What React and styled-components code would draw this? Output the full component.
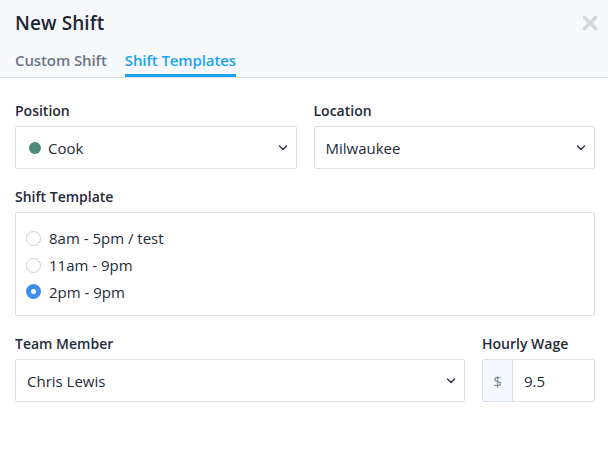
import React from 'react';
import styled, { createGlobalStyle } from 'styled-components';

const GlobalStyle = createGlobalStyle`
  html, body {
    margin: 0;
    padding: 0;
    background: #fff;
  }
  body {
    font-family: 'Open Sans', 'Liberation Sans', sans-serif;
    color: #1f2a38;
  }
`;

const templates = [
  { id: 1, label: '8am - 5pm / test' },
  { id: 2, label: '11am - 9pm' },
  { id: 3, label: '2pm - 9pm' }
];

const Chevron = () => (
  <svg width="10" height="6" viewBox="0 0 10 6">
    <path d="M1.5 1l3.5 3.6L8.5 1" fill="none" stroke="#2a3442" strokeWidth="1.4" strokeLinecap="round" strokeLinejoin="round" />
  </svg>
);

const CloseIcon = () => (
  <svg width="16" height="16" viewBox="0 0 16 16">
    <path d="M2.5 2.5l11 11M13.5 2.5l-11 11" stroke="#d3d7dd" strokeWidth="3.6" strokeLinecap="round" />
  </svg>
);

export default function App() {
  const selected = 3;
  return (
    <Modal>
      <GlobalStyle />
      <Header>
        <TitleRow>
          <Title>New Shift</Title>
          <Close>
            <CloseIcon />
          </Close>
        </TitleRow>
        <Tabs>
          <Tab>Custom Shift</Tab>
          <Tab active>Shift Templates</Tab>
        </Tabs>
      </Header>
      <Body>
        <Row>
          <Field>
            <Label>Position</Label>
            <Select>
              <Value>
                <Dot />
                Cook
              </Value>
              <Chevron />
            </Select>
          </Field>
          <Field>
            <Label>Location</Label>
            <Select>
              <Value>Milwaukee</Value>
              <Chevron />
            </Select>
          </Field>
        </Row>
        <Field>
          <Label>Shift Template</Label>
          <RadioBox>
            {templates.map(t => (
              <RadioRow key={t.id}>
                <Radio checked={t.id === selected} />
                {t.label}
              </RadioRow>
            ))}
          </RadioBox>
        </Field>
        <Row wage>
          <Field>
            <Label>Team Member</Label>
            <Select>
              <Value>Chris Lewis</Value>
              <Chevron />
            </Select>
          </Field>
          <Field>
            <Label>Hourly Wage</Label>
            <InputGroup>
              <Addon>$</Addon>
              <InputValue>9.5</InputValue>
            </InputGroup>
          </Field>
        </Row>
      </Body>
    </Modal>
  );
}

const Modal = styled.div`
  width: 608px;
  height: 456px;
  background: #fff;
  overflow: hidden;
`;

const Header = styled.div`
  background: #f7f9fc;
  border-bottom: 1px solid #dde2e9;
  padding: 0 10px 0 15px;
  height: 77px;
  display: flex;
  flex-direction: column;
`;

const TitleRow = styled.div`
  display: flex;
  align-items: center;
  justify-content: space-between;
  height: 47px;
  padding-top: 1px;
`;

const Title = styled.h1`
  margin: 0;
  font-size: 19px;
  font-weight: 600;
  color: #1c2533;
  letter-spacing: 0.1px;
`;

const Close = styled.div`
  display: flex;
`;

const Tabs = styled.div`
  display: flex;
  gap: 18px;
  flex: 1;
`;

const Tab = styled.div`
  font-size: 15px;
  font-weight: 600;
  letter-spacing: -0.1px;
  color: ${p => (p.active ? '#1aa3f0' : '#6b7686')};
  border-bottom: 3px solid ${p => (p.active ? '#1aa3f0' : 'transparent')};
  display: flex;
  align-items: center;
  height: 28px;
  margin-top: 2px;
`;

const Body = styled.div`
  padding: 23px 13px 0 15px;
  display: flex;
  flex-direction: column;
  gap: 18px;
`;

const Row = styled.div`
  display: grid;
  grid-template-columns: ${p => (p.wage ? '1fr 113px' : '1fr 1fr')};
  gap: 17px;
`;

const Field = styled.div`
  display: flex;
  flex-direction: column;
  gap: 5px;
`;

const Label = styled.div`
  font-size: 14px;
  font-weight: 600;
  line-height: 20px;
  color: #1f2a38;
`;

const Select = styled.div`
  height: 43px;
  box-sizing: border-box;
  border: 1px solid #dbe1e8;
  border-radius: 2px;
  display: flex;
  align-items: center;
  justify-content: space-between;
  padding: 0 8px 0 11px;
`;

const Value = styled.div`
  display: flex;
  align-items: center;
  gap: 7px;
  font-size: 15px;
  color: #1f2a38;
`;

const Dot = styled.span`
  width: 12px;
  height: 12px;
  border-radius: 50%;
  background: #4a8a7b;
  margin-left: 2px;
`;

const RadioBox = styled.div`
  height: 104px;
  box-sizing: border-box;
  border: 1px solid #dbe1e8;
  border-radius: 2px;
  padding: 12px 10px 10px;
  display: flex;
  flex-direction: column;
`;

const RadioRow = styled.div`
  height: 27px;
  display: flex;
  align-items: center;
  gap: 8px;
  font-size: 15px;
  color: #1f2a38;
`;

const Radio = styled.span`
  width: 15px;
  height: 15px;
  box-sizing: border-box;
  border-radius: 50%;
  border: ${p => (p.checked ? '5px solid #3b8ff0' : '1px solid #c8cdd5')};
  background: #fff;
`;

const InputGroup = styled.div`
  height: 43px;
  box-sizing: border-box;
  border: 1px solid #dbe1e8;
  border-radius: 2px;
  display: flex;
`;

const Addon = styled.div`
  width: 29px;
  background: #f4f7fb;
  border-right: 1px solid #dbe1e8;
  display: flex;
  align-items: center;
  justify-content: center;
  font-size: 15px;
  color: #7a8899;
`;

const InputValue = styled.div`
  display: flex;
  align-items: center;
  padding-left: 11px;
  font-size: 15px;
  color: #1f2a38;
`;
